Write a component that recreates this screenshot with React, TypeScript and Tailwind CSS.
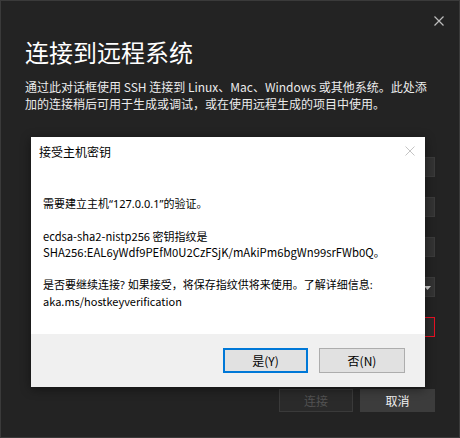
import React from "react";

const FONT = { fontFamily: '"Noto Sans CJK SC", "Noto Sans", sans-serif' };
const LATIN = { fontFamily: '"Noto Sans", sans-serif' };

function XIcon({ size, color, sw }: { size: number; color: string; sw: number }) {
  return (
    <svg width={size} height={size} viewBox="0 0 10 10" fill="none">
      <path d="M0.5 0.5 L9.5 9.5 M9.5 0.5 L0.5 9.5" stroke={color} strokeWidth={sw} />
    </svg>
  );
}

function Field({ children, red }: { children?: React.ReactNode; red?: boolean }) {
  return (
    <div
      className={
        "relative h-[20px] ml-[60px] " +
        (red ? "border border-[#e81123] bg-[#2c2c2c]" : "border border-[#3b3b3b] bg-[#333333]")
      }
    >
      {children}
    </div>
  );
}

export default function App() {
  return (
    <div
      style={FONT}
      className="relative w-[460px] h-[438px] overflow-hidden bg-[#232323] border border-[#3a3a3a] flex flex-col"
    >
      <div className="flex justify-end pt-[15px] pr-[15px]">
        <XIcon size={10} color="#bdbdbd" sw={1.2} />
      </div>
      <div className="pl-[24px] mt-[10px] text-[24px] leading-[32px] text-white">连接到远程系统</div>
      <div className="pl-[24px] mt-[10px] text-[12px] leading-[17px] text-[#ececec]">
        <div className="whitespace-nowrap">通过此对话框使用 SSH 连接到 Linux、Mac、Windows 或其他系统。此处添</div>
        <div className="whitespace-nowrap">加的连接稍后可用于生成或调试，或在使用远程生成的项目中使用。</div>
      </div>
      <div className="mt-[45px] pr-[24px] flex flex-col gap-[20px]">
        <Field />
        <Field />
        <Field />
        <Field>
          <svg className="absolute right-[3px] top-[8px]" width="7" height="4" viewBox="0 0 7 4">
            <path d="M0 0 H7 L3.5 4 Z" fill="#d0d0d0" />
          </svg>
        </Field>
        <Field red />
      </div>
      <div className="mt-[52px] pr-[24px] flex justify-end gap-[7px] text-[12px]">
        <div className="w-[74px] h-[23px] border border-[#3a3a3a] bg-[#2a2a2a] text-[#525252] flex items-center justify-center">
          连接
        </div>
        <div className="w-[75px] h-[23px] bg-[#3c3c3c] text-[#f2f2f2] flex items-center justify-center">取消</div>
      </div>

      <div className="absolute left-[30px] top-[136px] w-[394px] h-[250px] bg-white flex flex-col shadow-[0_2px_10px_rgba(0,0,0,0.45)]">
        <div className="flex justify-between items-start pl-[8px] pr-[10px] pt-[7px]">
          <div className="text-[12px] leading-[16px] text-black">接受主机密钥</div>
          <div className="pt-[2px]">
            <XIcon size={10} color="#c4c4c4" sw={1} />
          </div>
        </div>
        <div className="flex-1 pl-[12px] pt-[35px] text-[11px] leading-[16px] text-black">
          <div>
            需要建立主机<span style={LATIN}>“127.0.0.1”</span>的验证。
          </div>
          <div className="mt-[16px]">
            <span className="text-[11.2px]">ecdsa-sha2-nistp256</span> 密钥指纹是
          </div>
          <div className="whitespace-nowrap">
            <span className="text-[11.3px]">SHA256:EAL6yWdf9PEfM0U2CzFSjK/mAkiPm6bgWn99srFWb0Q</span>。
          </div>
          <div className="mt-[16px] whitespace-nowrap">
            是否要继续连接<span style={LATIN}>? </span>如果接受，将保存指纹供将来使用。了解详细信息<span style={LATIN}>:</span>
          </div>
          <div>aka.ms/hostkeyverification</div>
        </div>
        <div className="h-[53px] bg-[#f0f0f0] flex items-center justify-end gap-[11px] pr-[20px] text-[12px] text-black">
          <div className="w-[85px] h-[25px] border-2 border-[#0078d7] bg-[#e1e1e1] flex items-center justify-center">
            是(Y)
          </div>
          <div className="w-[86px] h-[25px] border border-[#adadad] bg-[#e1e1e1] flex items-center justify-center">
            否(N)
          </div>
        </div>
      </div>
    </div>
  );
}
